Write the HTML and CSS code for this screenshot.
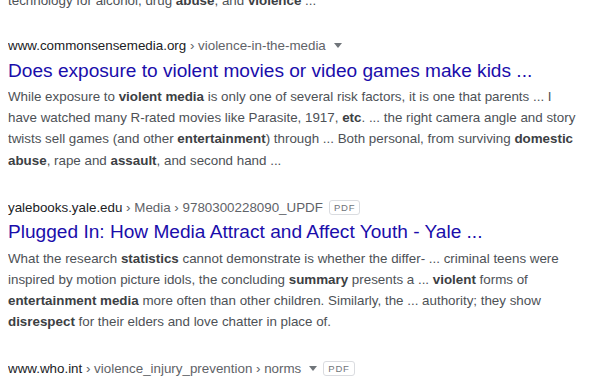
FILE: index.html
```html
<!DOCTYPE html>
<html lang="en">
<head>
    <meta charset="UTF-8">
    <title>Search results</title>
    <link rel="stylesheet" href="styles.css">
</head>
<body>
    <div class="results">
        <div class="result result-cut">
            <div class="snippet">technology for alcohol, drug <b>abuse</b>, and <b>violence</b> ...</div>
        </div>

        <div class="result">
            <div class="cite">
                <span class="domain">www.commonsensemedia.org</span><span class="path"> › violence-in-the-media</span>
                <span class="arrow"></span>
            </div>
            <a class="title" href="#">Does exposure to violent movies or video games make kids ...</a>
            <div class="snippet">While exposure to <b>violent media</b> is only one of several risk factors, it is one that parents ... I have watched many R-rated movies like Parasite, 1917, <b>etc</b>. ... the right camera angle and story twists sell games (and other <b>entertainment</b>) through ... Both personal, from surviving <b>domestic abuse</b>, rape and <b>assault</b>, and second hand ...</div>
        </div>

        <div class="result">
            <div class="cite">
                <span class="domain">yalebooks.yale.edu</span><span class="path"> › Media › 9780300228090_UPDF</span>
                <span class="badge">PDF</span>
            </div>
            <a class="title" href="#">Plugged In: How Media Attract and Affect Youth - Yale ...</a>
            <div class="snippet">What the research <b>statistics</b> cannot demonstrate is whether the differ- ... criminal teens were inspired by motion picture idols, the concluding <b>summary</b> presents a ... <b>violent</b> forms of <b>entertainment media</b> more often than other children. Similarly, the ... authority; they show <b>disrespect</b> for their elders and love chatter in place of.</div>
        </div>

        <div class="result">
            <div class="cite">
                <span class="domain">www.who.int</span><span class="path"> › violence_injury_prevention › norms</span>
                <span class="arrow"></span>
                <span class="badge">PDF</span>
            </div>
        </div>
    </div>
</body>
</html>
```

FILE: styles.css
```css
body {
    margin: 0 8px;
    background: #fff;
    font-family: 'Liberation Sans', Arial, sans-serif;
    overflow: hidden;
}

.results {
    width: 573px;
}

.result {
    margin-bottom: 28px;
}

.result-cut {
    margin-top: -13px;
    margin-bottom: 26px;
}

.cite {
    display: flex;
    align-items: center;
    font-size: 13.37px;
    line-height: 17.4px;
    white-space: nowrap;
}

.domain {
    color: #202124;
}

.path {
    color: #5f6368;
    white-space: pre;
}

.arrow {
    width: 0;
    height: 0;
    margin-left: 8px;
    border-style: solid;
    border-width: 5px 4px 0 4px;
    border-color: #70757a transparent;
}

.badge {
    margin-left: 6px;
    padding: 0 4px;
    height: 13px;
    line-height: 13px;
    border: 1px solid #dadce0;
    border-radius: 3px;
    font-size: 9.5px;
    letter-spacing: 0.8px;
    color: #70757a;
}

.title {
    display: block;
    margin-top: 4px;
    font-size: 19.1px;
    line-height: 24.8px;
    color: #1a0dab;
    text-decoration: none;
    white-space: nowrap;
}

.snippet {
    margin-top: 3px;
    font-size: 13.37px;
    line-height: 21.1px;
    color: #4d5156;
}

.snippet b {
    color: #3c4043;
}
```
